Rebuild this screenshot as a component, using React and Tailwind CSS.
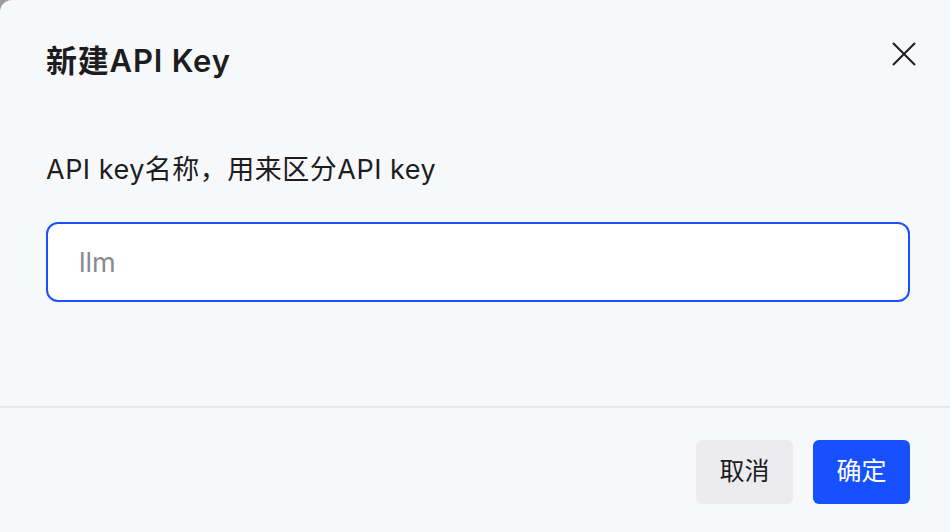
import { useState } from 'react';

const font = { fontFamily: 'Inter, "Noto Sans CJK SC", sans-serif' };

export default function App() {
  const [name, setName] = useState('');

  return (
    <div className="w-[950px] h-[532px] bg-[#9c9ca0] overflow-hidden" style={font}>
      <div className="h-full flex flex-col bg-[#f7f8fa] rounded-tl-[12px]">
        {/* Header */}
        <div className="flex items-start justify-between pl-[46px] pr-[34px] pt-[41px]">
          <h1 className="text-[31px] leading-[40px] tracking-[0.8px] font-semibold text-[#1d1d1f]">新建API Key</h1>
          <button className="w-[24px] h-[24px] mt-[1px] text-[#1d1d1f]">
            <svg viewBox="0 0 24 24" className="w-[24px] h-[24px]" fill="none" stroke="currentColor" strokeWidth="2">
              <path d="M1 1L23 23M23 1L1 23" />
            </svg>
          </button>
        </div>

        {/* Body */}
        <div className="pl-[46px] pr-[40px]">
          <p className="mt-[72px] text-[27px] leading-[34px] tracking-[0.5px] text-[#1d1d1f]">API key名称，用来区分API key</p>
          <input
            value={name}
            onChange={(e) => setName(e.target.value)}
            placeholder="llm"
            className="mt-[35px] w-full h-[80px] rounded-[12px] border-2 border-[#1a50ff] bg-white px-[31px] text-[27px] text-[#1d1d1f] placeholder:text-[#8a8a8e] outline-none"
          />
        </div>

        <div className="mt-[104px] h-[2px] bg-[#e8e9ee]" />

        {/* Footer */}
        <div className="flex justify-end gap-[20px] pt-[32px] pr-[40px]">
          <button className="w-[97px] h-[64px] rounded-[6px] bg-[#ececf0] text-[25px] text-[#1d1d1f]">取消</button>
          <button className="w-[97px] h-[64px] rounded-[6px] bg-[#1650ff] text-[25px] text-white">确定</button>
        </div>
      </div>
    </div>
  );
}
